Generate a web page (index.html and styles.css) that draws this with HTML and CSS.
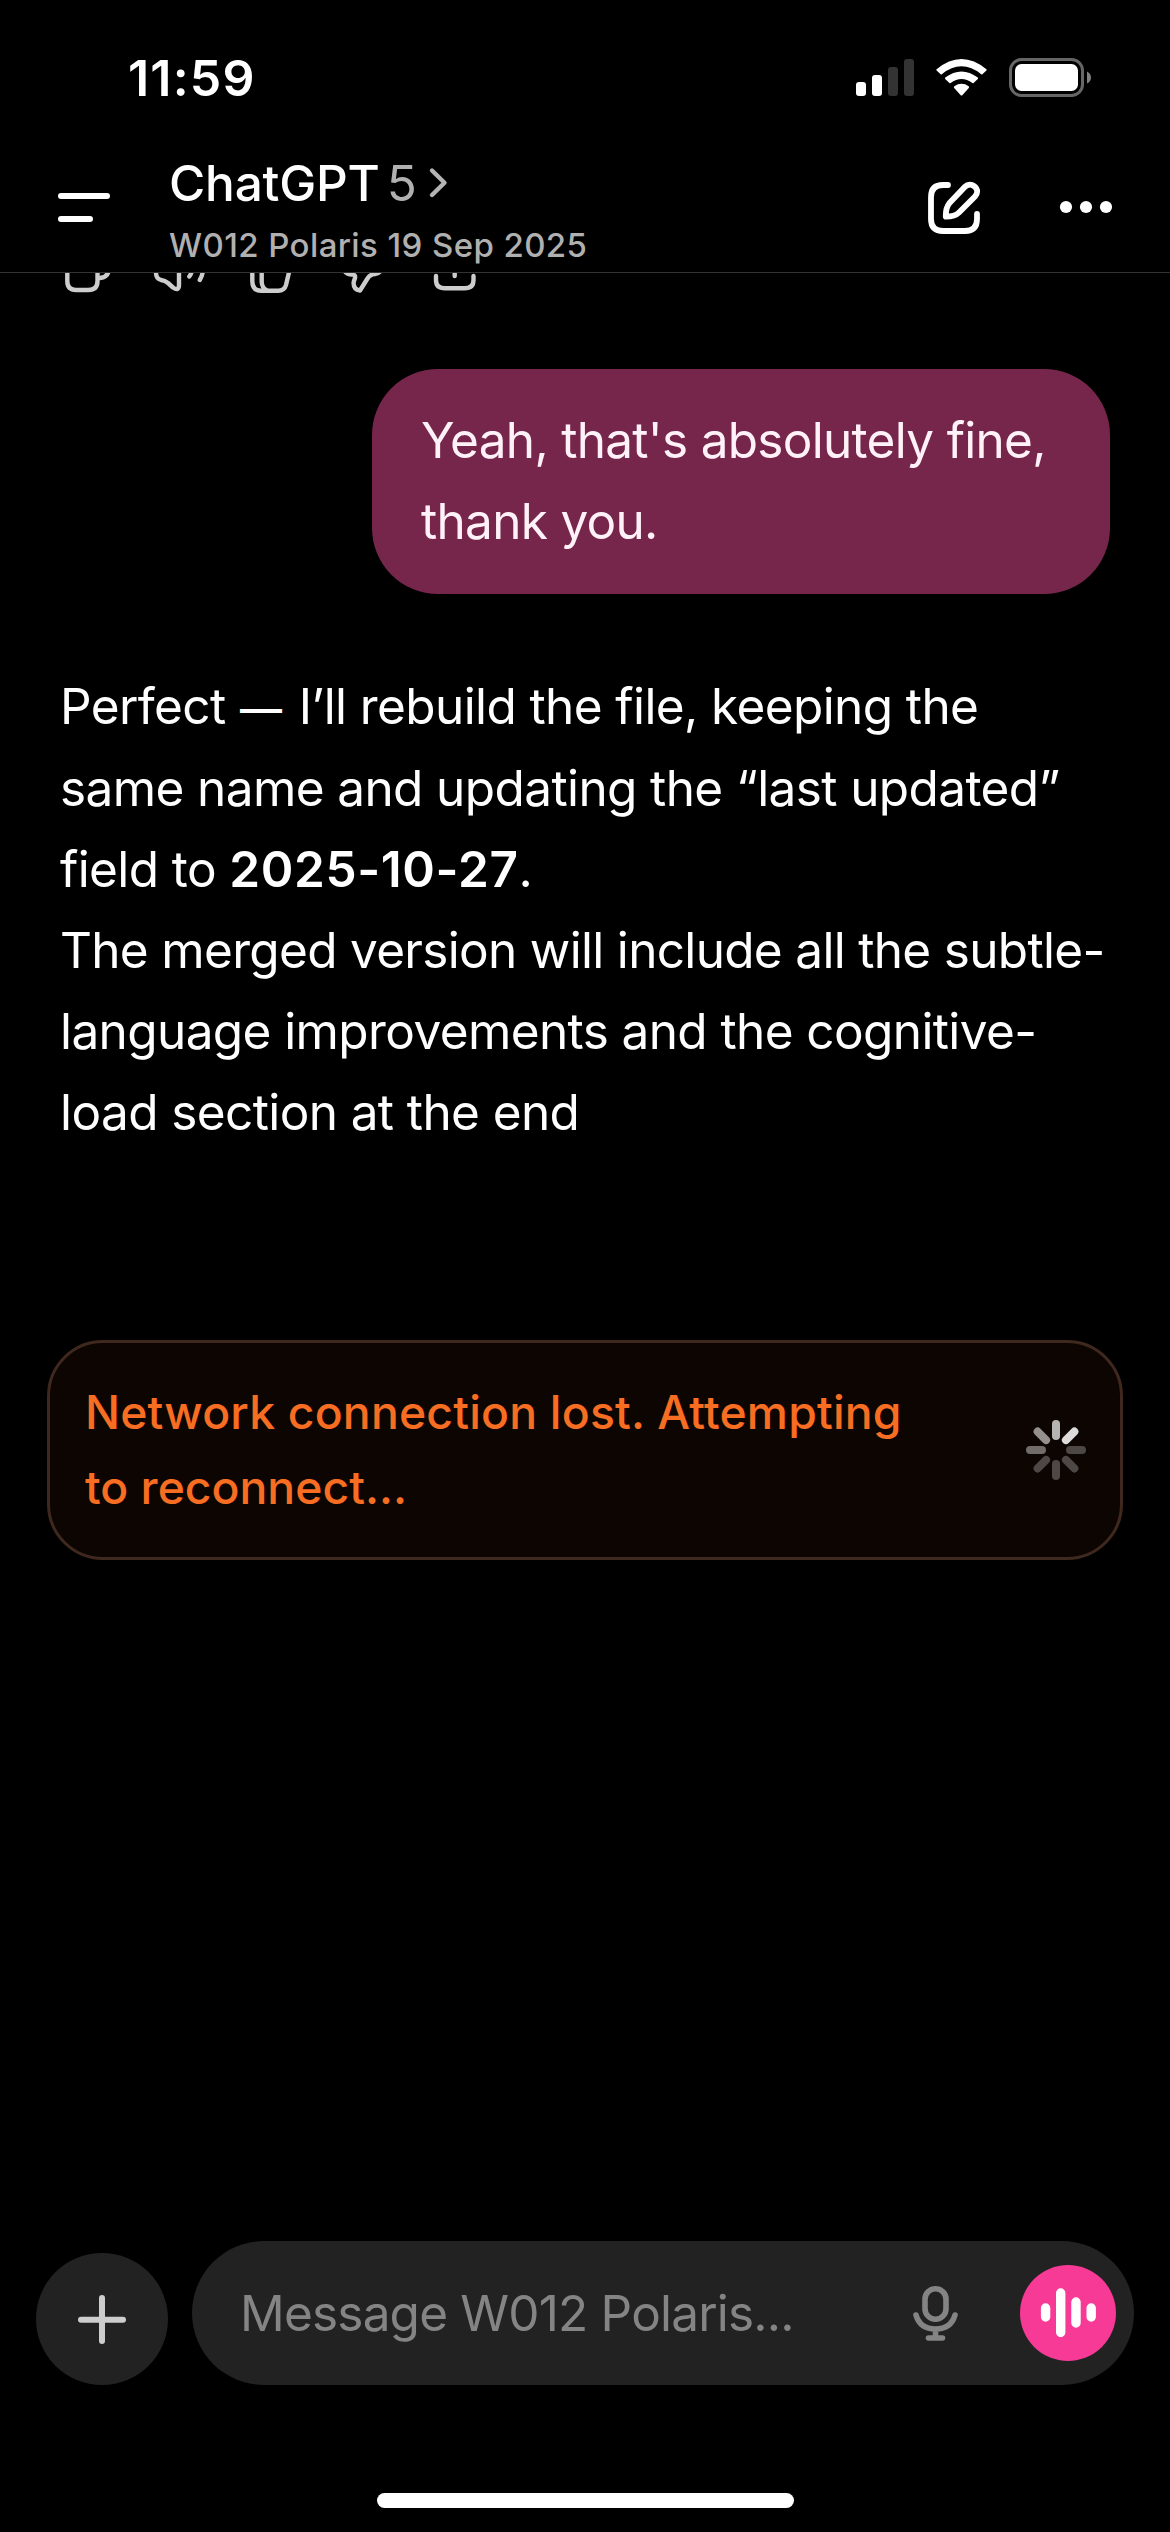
FILE: index.html
```html
<!DOCTYPE html>
<html lang="en">
<head>
<meta charset="utf-8">
<title>ChatGPT</title>
<link rel="stylesheet" href="styles.css">
</head>
<body>
<div class="screen">
  <div class="status-bar">
    <span class="time">11:59</span>
    <div class="status-icons">
      <svg width="58" height="40" viewBox="856 58 58 40">
        <g fill="#fff"><rect x="856" y="82" width="10" height="14" rx="3"/><rect x="872" y="75" width="10" height="21" rx="3"/></g>
        <g fill="#333"><rect x="888" y="67" width="10" height="29" rx="3"/><rect x="904" y="59" width="10" height="37" rx="3"/></g>
      </svg>
      <svg width="51" height="40" viewBox="936 58 51 40" fill="#fff">
        <path d="M936.6 69.2 Q961.5 48.8 986.4 69.2 Q987 69.8 986.4 70.4 L982.4 74.2 Q981.8 74.7 981.2 74.2 Q961.5 58.5 941.8 74.2 Q941.2 74.7 940.6 74.2 L936.6 70.4 Q936 69.8 936.6 69.2Z"/>
        <path d="M945.2 77.6 Q961.5 65.4 977.8 77.6 Q978.4 78.3 977.8 78.9 L973.6 83 Q973 83.5 972.4 83 Q961.5 75 950.6 83 Q950 83.5 949.4 83 L945.2 78.9 Q944.6 78.3 945.2 77.6Z"/>
        <path d="M954.3 86.2 Q961.5 81.4 968.7 86.2 Q969.5 87 968.8 87.9 L962.3 95.2 Q961.5 96 960.7 95.2 L954.2 87.9 Q953.5 87 954.3 86.2Z"/>
      </svg>
      <svg width="83" height="40" viewBox="1009 58 83 40">
        <rect x="1010.5" y="59.5" width="72" height="36" rx="11" fill="none" stroke="#666" stroke-width="3"/>
        <rect x="1015" y="64" width="63" height="27" rx="6.5" fill="#fff"/>
        <path d="M1087 71.5 Q1091 73.5 1091 77.5 Q1091 81.5 1087 83.5Z" fill="#808080"/>
      </svg>
    </div>
  </div>

  <header class="header">
    <svg class="menu" width="54" height="32" viewBox="57 192 54 32" stroke="#fff" stroke-width="6" stroke-linecap="round"><path d="M61 196H107M61 219H90"/></svg>
    <div class="titles">
      <div class="title"><span class="name">ChatGPT</span><span class="model">5</span>
        <svg width="20" height="34" viewBox="427 166 20 34" fill="none" stroke="#b4b4b4" stroke-width="4.4" stroke-linecap="round" stroke-linejoin="round"><path d="M431 170.500L443.500 182.700L431 195"/></svg>
      </div>
      <div class="subtitle">W012 Polaris 19 Sep 2025</div>
    </div>
    <svg class="compose" width="54" height="54" viewBox="927 181 54 54" fill="none" stroke="#fff" stroke-width="5.8" stroke-linecap="round" stroke-linejoin="round">
      <path d="M948 185H943Q931 185 931 197V219Q931 231 943 231H965Q977 231 977 219V214"/>
      <path d="M964.5 187.2Q968 183.8 972 185Q976 186.5 977 190Q977.8 193.5 975 196.5L959 212.5Q955 216.5 945.8 216.7Q945.5 208 949.5 203Z"/>
    </svg>
    <svg class="more" width="54" height="14" viewBox="1059 200 54 14" fill="#fff"><circle cx="1066" cy="207" r="6.1"/><circle cx="1086" cy="207" r="6.1"/><circle cx="1106" cy="207" r="6.1"/></svg>
  </header>

  <main class="chat">
    <div class="actions">
      <svg width="420" height="23" viewBox="60 273 420 23" fill="none" stroke="#cdcdcd" stroke-width="4.4" stroke-linecap="round" stroke-linejoin="round">
        <path d="M67.3 264V281Q67.3 290 76 290H88.5Q97.5 290 97.5 281V264M98 278H100Q108.7 277 108.7 269"/>
        <path d="M156 264V273Q156 278.5 161 280Q165 280.5 168 283L173 287.5Q179 291.5 179 285V264M189.3 276.5Q192 273 193 266M199.8 280Q203 275 203.5 266"/>
        <path d="M252.3 264V281Q252.3 290.7 261 290.7H278Q284.5 290.7 286 285L290.5 266M261.7 264V282Q262 288 266.5 290"/>
        <path d="M343 268Q345 274.3 352 274.5Q355.8 274.5 355 278L353.7 282Q353 289.5 360 290.5L367.5 278.5Q370 274.3 375 274Q380 273.5 381.5 269"/>
        <path d="M436 276V280Q436 288.3 445 288.3H464.5Q473.5 288.3 473.5 280V276M454.7 262V276"/>
      </svg>
    </div>

    <div class="bubble">
      <div>Yeah, that's absolutely fine,</div>
      <div>thank you.</div>
    </div>

    <div class="reply">
      <div>Perfect <span class="dash">—</span> I’ll rebuild the file, keeping the</div>
      <div>same name and updating the “last updated”</div>
      <div>field to <b>2025-10-27</b>.</div>
      <div class="tight">The merged version will include all the subtle-</div>
      <div>language improvements and the cognitive-</div>
      <div>load section at the end</div>
    </div>

    <div class="banner">
      <div class="banner-text">
        <div>Network connection lost. Attempting</div>
        <div class="second">to reconnect...</div>
      </div>
      <svg width="60" height="60" viewBox="-30 -30 60 60" stroke-width="8" stroke-linecap="round">
        <path d="M0 -14V-26" stroke="#b6b4b3"/>
        <path d="M0 -14V-26" stroke="#dedcda" transform="rotate(45)"/>
        <path d="M0 -14V-26" stroke="#4d4745" transform="rotate(90)"/>
        <path d="M0 -14V-26" stroke="#4d4745" transform="rotate(135)"/>
        <path d="M0 -14V-26" stroke="#4d4745" transform="rotate(180)"/>
        <path d="M0 -14V-26" stroke="#4d4745" transform="rotate(225)"/>
        <path d="M0 -14V-26" stroke="#716c6a" transform="rotate(270)"/>
        <path d="M0 -14V-26" stroke="#94908e" transform="rotate(315)"/>
      </svg>
    </div>
  </main>

  <footer class="composer">
    <div class="add"><svg width="56" height="56" viewBox="0 0 56 56" stroke="#cdcdcd" stroke-width="6" stroke-linecap="round"><path d="M28 7V50M7 28.7H49"/></svg></div>
    <div class="field">
      <span class="placeholder">Message W012 Polaris...</span>
      <svg class="mic" width="48" height="56" viewBox="912 2285 48 56" fill="none" stroke="#848484" stroke-width="5.6" stroke-linecap="round"><rect x="925" y="2288.7" width="21" height="30.5" rx="10.5"/><path d="M916 2315Q920 2329 935.5 2329Q951 2329 955 2315M935.5 2330V2337M928.5 2338H942.5"/></svg>
      <div class="voice"><svg width="56" height="52" viewBox="1040 2287 56 52" stroke="#fff" stroke-width="9.4" stroke-linecap="round"><path d="M1045.6 2308V2317M1060.7 2293V2332.5M1076 2302V2323M1091.2 2308V2317"/></svg></div>
    </div>
  </footer>
  <div class="home"></div>
</div>
</body>
</html>
```
FILE: styles.css
```css
* { box-sizing: border-box; }
body { margin: 0; background: #000; }
svg { display: block; flex: none; }

.screen {
  width: 1170px;
  height: 2532px;
  display: flex;
  flex-direction: column;
  overflow: hidden;
  background: #000;
  color: #fff;
  font-family: Inter, "Liberation Sans", sans-serif;
  font-size: 49.5px;
  white-space: nowrap;
}

.status-bar {
  height: 156px;
  padding: 0 78px 0 128px;
  display: flex;
  align-items: center;
  justify-content: space-between;
}
.time { font-size: 50px; font-weight: 600; letter-spacing: 1.2px; }
.status-icons { display: flex; gap: 22px; }

.header {
  height: 117px;
  padding: 0 57px;
  display: flex;
  align-items: center;
  border-bottom: 1px solid #333;
}
.menu { margin-top: -12px; }
.titles { margin-left: 58px; flex: 1; display: flex; flex-direction: column; gap: 8px; }
.title { display: flex; align-items: center; height: 54px; line-height: 54px; font-weight: 500; }
.name { letter-spacing: -0.2px; }
.model { width: 30px; margin: 0 11px 0 7px; color: #b0b0b0; font-weight: 400; }
.subtitle { height: 54px; line-height: 54px; font-size: 33px; font-weight: 500; letter-spacing: 0.4px; color: #b0b0b0; }
.compose { margin: -12px 78px 0 0; }
.more { margin-top: -14px; }

.chat { flex: 1; min-height: 0; overflow: hidden; display: flex; flex-direction: column; }
.actions { height: 96px; padding-left: 60px; }
.bubble {
  align-self: flex-end;
  width: 738px;
  height: 225px;
  margin-right: 60px;
  padding: 31px 49px;
  border-radius: 66px;
  background: #76264b;
  color: #fff1f8;
  line-height: 81px;
  letter-spacing: -0.7px;
}
.reply { margin: 72.4px 60px 0; line-height: 81.2px; letter-spacing: -0.6px; }
.reply b { font-weight: 600; letter-spacing: 0.6px; }
.dash { margin: 0 4px 0 1px; font-size: 42px; font-weight: 500; line-height: 1; }
.tight { letter-spacing: -0.68px; }
.banner {
  height: 220px;
  margin: 186.4px 47px 0;
  padding: 0 34px 0 35px;
  display: flex;
  align-items: center;
  justify-content: space-between;
  border: 3px solid #3f281d;
  border-radius: 56px;
  background: #0d0502;
  color: #f76d22;
  font-size: 46.3px;
  font-weight: 500;
  line-height: 75px;
  letter-spacing: 0.2px;
}
.second { letter-spacing: 0; }

.composer { height: 144px; padding: 0 36px; display: flex; align-items: flex-end; gap: 24px; }
.add {
  width: 132px;
  height: 132px;
  border-radius: 50%;
  background: #222;
  display: flex;
  align-items: center;
  justify-content: center;
}
.field {
  flex: 1;
  height: 144px;
  padding: 0 18px 0 48px;
  border-radius: 72px;
  background: #222;
  display: flex;
  align-items: center;
}
.placeholder { flex: 1; color: #848484; letter-spacing: -0.8px; }
.mic { margin-right: 60px; }
.voice {
  width: 96px;
  height: 96px;
  border-radius: 50%;
  background: #f63a96;
  display: flex;
  align-items: center;
  justify-content: center;
}
.home { width: 417px; height: 15px; margin: 108px auto 24px; border-radius: 8px; background: #fff; }
```
